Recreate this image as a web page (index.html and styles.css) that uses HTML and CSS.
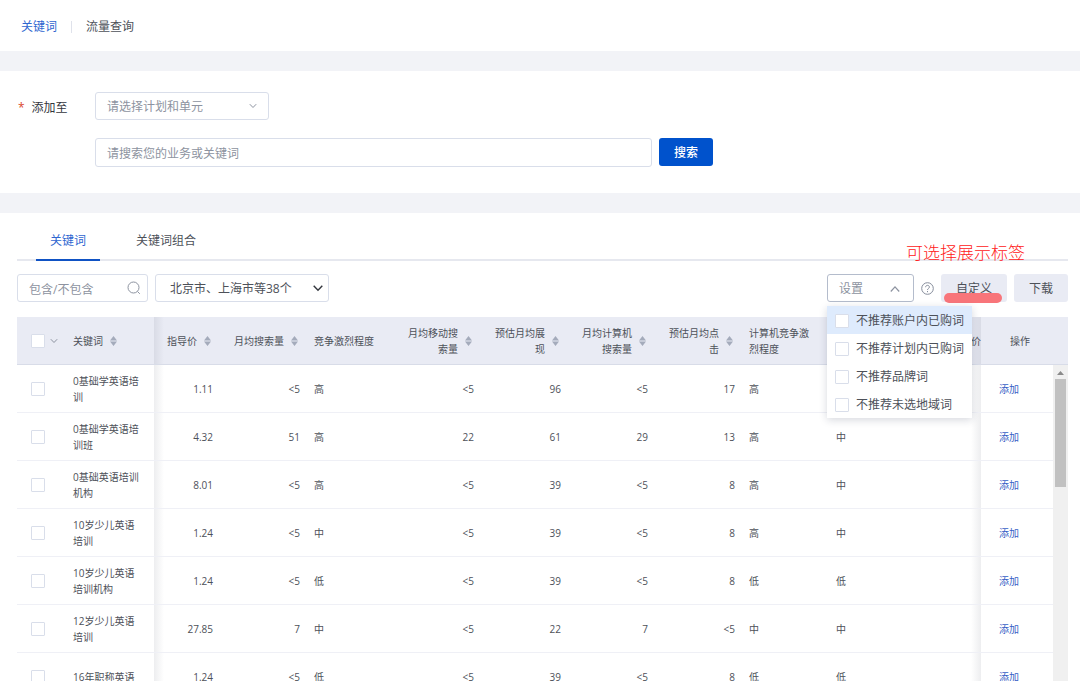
FILE: index.html
```html
<!DOCTYPE html>
<html lang="zh-CN">
<head>
<meta charset="utf-8">
<title>关键词</title>
<link rel="stylesheet" href="styles.css">
</head>
<body>
<svg class="defs" width="0" height="0" aria-hidden="true">
  <symbol id="sort" viewBox="0 0 7 10"><path d="M3.500 0 7 4.400H0zM0 5.600h7L3.500 10z" fill="#a4abbb"/></symbol>
  <symbol id="down" viewBox="0 0 10 10"><path d="M1.800 3.200 5 6.500 8.200 3.200" fill="none" stroke="currentColor"/></symbol>
</svg>
<nav class="topnav">
  <a href="#" class="current">关键词</a>
  <span class="divider"></span>
  <a href="#">流量查询</a>
</nav>
<form class="search">
  <label class="search-label" for="plan"><span class="required">*</span>添加至</label>
  <div class="select plan">
    <select id="plan"><option>请选择计划和单元</option></select>
    <svg class="chevron"><use href="#down"/></svg>
  </div>
  <div class="search-row">
    <input class="field query" type="text" aria-label="搜索" placeholder="请搜索您的业务或关键词">
    <button class="btn primary" type="button">搜索</button>
  </div>
</form>
<main class="panel">
  <div class="tabs">
    <button type="button" class="tab active">关键词</button>
    <button type="button" class="tab">关键词组合</button>
    <span class="note">可选择展示标签</span>
  </div>
  <div class="toolbar">
    <div class="filter">
      <input class="field" type="text" aria-label="筛选" placeholder="包含/不包含">
      <svg class="magnifier" viewBox="0 0 14 14"><circle cx="6.500" cy="6.500" r="5.500"/><path d="M10.500 10.500 12.800 12.800"/></svg>
    </div>
    <div class="select region">
      <select aria-label="地域"><option>北京市、上海市等38个</option></select>
      <svg class="chevron" viewBox="0 0 10 10"><path d="M.7 2.700 5 7.200 9.300 2.700" fill="none" stroke="currentColor" stroke-width="1.400"/></svg>
    </div>
    <div class="settings">
      <button type="button" class="settings-toggle" aria-expanded="true">设置
        <svg class="caret" viewBox="0 0 10 10"><path d="M.8 7.500 5 2.800 9.200 7.500" fill="none" stroke="currentColor" stroke-width="1.200"/></svg>
      </button>
      <div class="menu">
        <label class="hover"><input type="checkbox">不推荐账户内已购词</label>
        <label><input type="checkbox">不推荐计划内已购词</label>
        <label><input type="checkbox">不推荐品牌词</label>
        <label><input type="checkbox">不推荐未选地域词</label>
      </div>
    </div>
    <svg class="help" viewBox="0 0 13 13"><circle cx="6.500" cy="6.500" r="5.800"/><path d="M4.600 5.200c0-2.500 3.800-2.400 3.800-.1 0 1.300-1.900 1.400-1.900 2.900M6.500 9v1.200"/></svg>
    <button type="button" class="btn custom">自定义<span class="marker"></span></button>
    <button type="button" class="btn">下载</button>
  </div>
  <div class="grid">
    <table>
      <colgroup><col class="c-check"><col class="c-word"><col class="c-price"><col class="c-data" span="8"><col><col class="c-action"></colgroup>
      <thead>
        <tr>
          <th class="check"><span class="head"><input type="checkbox" aria-label="全选"><svg class="mini"><use href="#down"/></svg></span></th>
          <th class="word"><span class="head">关键词<svg class="sort"><use href="#sort"/></svg></span></th>
          <th class="num shade"><span class="head">指导价<svg class="sort"><use href="#sort"/></svg></span></th>
          <th class="num"><span class="head">月均搜索量<svg class="sort"><use href="#sort"/></svg></span></th>
          <th>竞争激烈程度</th>
          <th class="num"><span class="head">月均移动搜<br>索量<svg class="sort"><use href="#sort"/></svg></span></th>
          <th class="num"><span class="head">预估月均展<br>现<svg class="sort"><use href="#sort"/></svg></span></th>
          <th class="num"><span class="head">月均计算机<br>搜索量<svg class="sort"><use href="#sort"/></svg></span></th>
          <th class="num"><span class="head">预估月均点<br>击<svg class="sort"><use href="#sort"/></svg></span></th>
          <th>计算机竞争激<br>烈程度</th>
          <th></th>
          <th class="edge">价</th>
          <th class="action">操作</th>
        </tr>
      </thead>
      <tbody>
        <tr><td class="check"><input type="checkbox" aria-label="0基础学英语培训"></td><td class="word">0基础学英语培<br>训</td><td class="num shade">1.11</td><td class="num">&lt;5</td><td>高</td><td class="num">&lt;5</td><td class="num">96</td><td class="num">&lt;5</td><td class="num">17</td><td>高</td><td></td><td class="edge"></td><td class="action"><a href="#">添加</a></td></tr>
        <tr><td class="check"><input type="checkbox" aria-label="0基础学英语培训班"></td><td class="word">0基础学英语培<br>训班</td><td class="num shade">4.32</td><td class="num">51</td><td>高</td><td class="num">22</td><td class="num">61</td><td class="num">29</td><td class="num">13</td><td>高</td><td>中</td><td class="edge"></td><td class="action"><a href="#">添加</a></td></tr>
        <tr><td class="check"><input type="checkbox" aria-label="0基础英语培训机构"></td><td class="word">0基础英语培训<br>机构</td><td class="num shade">8.01</td><td class="num">&lt;5</td><td>高</td><td class="num">&lt;5</td><td class="num">39</td><td class="num">&lt;5</td><td class="num">8</td><td>高</td><td>中</td><td class="edge"></td><td class="action"><a href="#">添加</a></td></tr>
        <tr><td class="check"><input type="checkbox" aria-label="10岁少儿英语培训"></td><td class="word">10岁少儿英语<br>培训</td><td class="num shade">1.24</td><td class="num">&lt;5</td><td>中</td><td class="num">&lt;5</td><td class="num">39</td><td class="num">&lt;5</td><td class="num">8</td><td>高</td><td>中</td><td class="edge"></td><td class="action"><a href="#">添加</a></td></tr>
        <tr><td class="check"><input type="checkbox" aria-label="10岁少儿英语培训机构"></td><td class="word">10岁少儿英语<br>培训机构</td><td class="num shade">1.24</td><td class="num">&lt;5</td><td>低</td><td class="num">&lt;5</td><td class="num">39</td><td class="num">&lt;5</td><td class="num">8</td><td>低</td><td>低</td><td class="edge"></td><td class="action"><a href="#">添加</a></td></tr>
        <tr><td class="check"><input type="checkbox" aria-label="12岁少儿英语培训"></td><td class="word">12岁少儿英语<br>培训</td><td class="num shade">27.85</td><td class="num">7</td><td>中</td><td class="num">&lt;5</td><td class="num">22</td><td class="num">7</td><td class="num">&lt;5</td><td>中</td><td>中</td><td class="edge"></td><td class="action"><a href="#">添加</a></td></tr>
        <tr><td class="check"><input type="checkbox" aria-label="16年职称英语"></td><td class="word">16年职称英语</td><td class="num shade">1.24</td><td class="num">&lt;5</td><td>低</td><td class="num">&lt;5</td><td class="num">39</td><td class="num">&lt;5</td><td class="num">8</td><td>低</td><td>低</td><td class="edge"></td><td class="action"><a href="#">添加</a></td></tr>
      </tbody>
    </table>
    <div class="scroll">
      <div class="scroll-head"></div>
      <div class="scroll-track">
        <svg class="scroll-up" viewBox="0 0 7 4"><path d="M3.500 0 7 4H0z" fill="#8a8a8a"/></svg>
        <div class="scroll-thumb"></div>
      </div>
    </div>
  </div>
</main>
</body>
</html>
```

FILE: styles.css
```css
* { box-sizing: border-box; }

body {
  margin: 0;
  height: 100vh;
  overflow: hidden;
  display: flex;
  flex-direction: column;
  gap: 20px;
  background: #f2f3f7;
  color: #4d5159;
  font: 12px/16px "Open Sans", "Noto Sans CJK SC", sans-serif;
}

button, input, select { font: inherit; color: inherit; margin: 0; }
button { cursor: pointer; }
a { color: inherit; text-decoration: none; }
.defs { position: absolute; }

.topnav {
  flex: none;
  display: flex;
  align-items: center;
  gap: 14px;
  height: 51px;
  padding: 2px 21px 0;
  background: #fff;
}
.topnav .current { color: #2f66d0; }
.divider { width: 1px; height: 12px; background: #dfe2eb; }

.search {
  flex: none;
  display: grid;
  grid-template-columns: 77px 1fr;
  row-gap: 18px;
  align-items: center;
  padding: 21px 18px 26px;
  background: #fff;
}
.search-label { display: flex; gap: 7px; padding-top: 3px; color: #33363d; }
.required { color: #d9472b; }
.search-row { grid-column: 2; display: flex; gap: 7px; align-items: flex-start; }

.field, .select select {
  width: 100%;
  height: 28px;
  padding: 2px 11px 0;
  border: 1px solid #d9deea;
  border-radius: 3px;
  background: #fff;
  outline: none;
}
.field::placeholder { color: #8d93a0; opacity: 1; }
.search .query { width: 557px; height: 29px; }

.select { position: relative; width: 174px; }
.select select { appearance: none; }
.plan select { color: #8d93a0; }
.region select { padding: 1px 14px 0; }
.chevron { position: absolute; right: 11px; top: 9px; width: 10px; height: 10px; color: #8d93a0; pointer-events: none; }
.region .chevron { right: 6px; color: #33363d; }

.btn {
  position: relative;
  height: 28px;
  padding: 2px 15px 0;
  border: 0;
  border-radius: 3px;
  background: #e9ebf4;
  white-space: nowrap;
}
.primary { background: #0052cc; color: #fff; font-weight: 500; }

.panel { flex: 1; min-height: 0; padding: 0 12px 0 17px; background: #fff; }

.tabs { position: relative; display: flex; gap: 20px; padding-left: 19px; height: 48px; border-bottom: 2px solid #e6e8ef; }
.tab { height: 48px; padding: 10px 14px 0; border: 0; border-bottom: 2px solid transparent; background: none; }
.tab + .tab { margin-left: 2px; }
.tab.active { color: #2f66d0; border-color: #0f52c4; }
.note {
  position: absolute;
  right: 43px;
  bottom: -7px;
  color: #ff2020;
  font: 300 17px/24px "Liberation Serif", "Noto Sans CJK SC", serif;
}

.toolbar { display: flex; align-items: center; gap: 7px; padding: 13px 0 15px; }
.filter { position: relative; width: 131px; }
.magnifier { position: absolute; right: 7px; top: 7px; width: 14px; height: 14px; fill: none; stroke: #8d93a0; }
.settings { position: relative; margin-left: auto; width: 87px; }
.settings-toggle {
  display: flex;
  align-items: center;
  justify-content: space-between;
  width: 100%;
  height: 28px;
  padding: 1px 13px 0 11px;
  border: 1px solid #b4bccc;
  border-radius: 3px;
  background: #fff;
  color: #8d93a0;
}
.caret { width: 10px; height: 10px; }
.help { width: 13px; height: 13px; fill: none; stroke: #858c9b; }
.marker { position: absolute; left: 3px; right: 5px; bottom: -1px; height: 10px; border-radius: 5px; background: #f8757a; }

.menu {
  position: absolute;
  z-index: 2;
  left: 0;
  top: 32px;
  background: #fff;
  box-shadow: 0 2px 8px rgba(30, 40, 70, .18);
}
.menu label { display: flex; align-items: center; gap: 7px; height: 28px; padding: 2px 8px 0; white-space: nowrap; }
.menu .hover { background: #deebfd; }

input[type="checkbox"] {
  flex: none;
  display: block;
  appearance: none;
  width: 14px;
  height: 14px;
  border: 1px solid #d9deea;
  border-radius: 1px;
  background: #fff;
}

.grid { display: flex; font-size: 10px; }
table { flex: 1; width: 100%; min-width: 0; table-layout: fixed; border-collapse: separate; border-spacing: 0; }
.c-check { width: 47px; }
.c-word { width: 90px; }
.c-price { width: 66px; }
.c-data { width: 87px; }
.c-action { width: 72px; }
th, td { height: 48px; padding: 0 7px; text-align: left; font-weight: 400; border-bottom: 1px solid #eff0f6; white-space: nowrap; }
th { background-color: #e9ebf4; border-color: #d8dce8; }
.head { display: flex; align-items: center; gap: 7px; }
.check { padding: 0 0 0 14px; }
.check .head { gap: 4px; }
.word { padding: 0 0 0 9px; }
.num { text-align: right; }
.num .head { justify-content: flex-end; padding-right: 2px; }
th.num { padding-left: 0; }
.sort { flex: none; width: 7px; height: 10px; }
.mini { width: 10px; height: 10px; color: #8d93a0; }
.shade { background-image: linear-gradient(to right, rgba(30, 35, 60, .08), transparent 10px); }
.edge { padding-right: 0; text-align: right; background-image: linear-gradient(to left, rgba(30, 35, 60, .08), transparent 10px); }
.action { padding: 0 0 0 18px; }
th.action { padding-left: 29px; }
.action a { color: #3660c6; }

.scroll { flex: none; display: flex; flex-direction: column; width: 15px; }
.scroll-head { height: 48px; background: #e9ebf4; border-bottom: 1px solid #d8dce8; }
.scroll-track { flex: 1; display: flex; flex-direction: column; align-items: center; gap: 4px; padding-top: 6px; background: #f0f0f0; }
.scroll-up { width: 7px; height: 4px; }
.scroll-thumb { width: 11px; height: 108px; background: #c1c1c1; }
```
